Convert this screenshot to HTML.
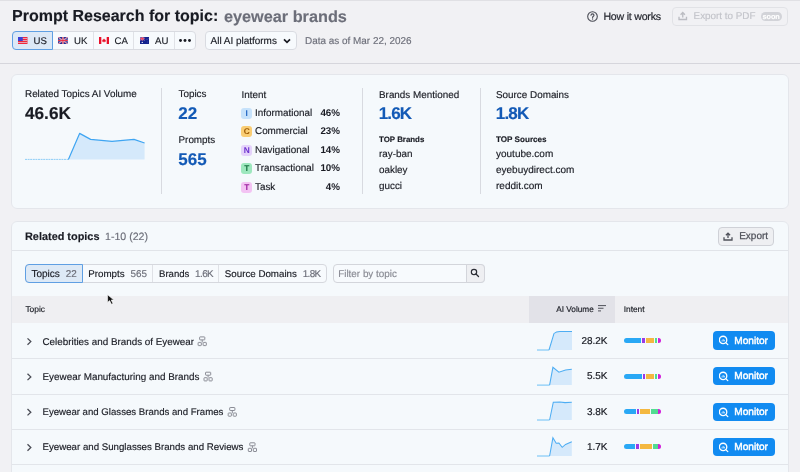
<!DOCTYPE html>
<html><head><meta charset="utf-8">
<style>
*{box-sizing:border-box;margin:0;padding:0}
html,body{width:800px;height:472px;overflow:hidden}
body{background:#f1f1f4;font-family:"Liberation Sans",sans-serif;color:#191b23;position:relative;text-rendering:geometricPrecision}
.t{position:absolute;white-space:nowrap;line-height:1;-webkit-text-stroke-width:0.15px}
.b{position:absolute}
.n{font-size:9.9px}
.big{font-size:17px;font-weight:bold}
.blue{color:#135ab6}
.gray{color:#6c6e79}
.vdiv{position:absolute;width:1px;background:#d8dae0}
.badge{position:absolute;left:241.2px;width:11px;height:11px;border-radius:3px;font-size:8.4px;font-weight:bold;text-align:center;line-height:11px}
.pct{position:absolute;left:300px;width:40px;text-align:right;font-size:9.8px;font-weight:bold;line-height:1}
.il{left:255px}
.tab{position:absolute;top:264px;height:18.5px;border:1px solid #d5d7dd;background:#f7fafd}
.rowdiv{position:absolute;left:12px;width:776px;height:1px;background:#e2e5ea}
.mon{position:absolute;left:712.5px;width:62px;height:18.5px;background:#118bf1;border-radius:4px}
.mon span{position:absolute;left:21.8px;top:5.5px;color:#fff;font-size:10.1px;line-height:1;-webkit-text-stroke:0.45px #fff}
.mon svg{position:absolute;left:6px;top:4px}
.val{position:absolute;left:560px;width:47.5px;text-align:right;font-size:9.95px;line-height:1;margin-top:0.6px;-webkit-text-stroke-width:0.2px}
</style></head><body><div style="position:absolute;left:0;top:0;width:800px;height:472px;will-change:transform">
<div class="b" style="left:0;top:0;width:800px;height:1px;background:#e0e0e4"></div>

<div class="t" style="left:12px;top:9px;font-size:16px;font-weight:bold">Prompt Research for topic:</div>
<div class="t" style="left:224px;top:9px;font-size:16.25px;font-weight:bold;color:#6c6e79">eyewear brands</div>

<!-- country segmented control -->
<div class="b" style="left:11.5px;top:31px;width:184.2px;height:19px;border:1px solid #d9dbe1;border-radius:4px;background:#f7fafd"></div>
<div class="b" style="left:11.5px;top:31px;width:41.5px;height:19px;border:1px solid #5f9fe3;border-radius:4px 0 0 4px;background:#dce8f6"></div>
<div class="b" style="left:92.5px;top:32px;width:1px;height:16.5px;background:#e0e2e7"></div>
<div class="b" style="left:133px;top:32px;width:1px;height:16.5px;background:#e0e2e7"></div>
<div class="b" style="left:173.5px;top:32px;width:1px;height:16.5px;background:#e0e2e7"></div>
<!-- US flag -->
<svg class="b" style="left:18px;top:37px" width="9.5" height="7" viewBox="0 0 19 14">
<rect width="19" height="14" fill="#f0283c"/>
<rect y="2" width="19" height="2" fill="#e4a0b0"/><rect y="6" width="19" height="2" fill="#e4a0b0"/><rect y="10" width="19" height="2" fill="#e4a0b0"/>
<rect width="9.5" height="8" fill="#3b3fd6"/></svg>
<div class="t" style="left:33.5px;top:37.1px;font-size:9.6px">US</div>
<!-- UK flag -->
<svg class="b" style="left:58.3px;top:37px" width="9.8" height="7" viewBox="0 0 19.6 14">
<rect width="19.6" height="14" fill="#1f2f95"/>
<path d="M0 0L19.6 14M19.6 0L0 14" stroke="#e8c8dc" stroke-width="2.2"/>
<path d="M0 0L19.6 14M19.6 0L0 14" stroke="#e03a55" stroke-width="1"/>
<path d="M9.8 0V14M0 7H19.6" stroke="#f0d0dc" stroke-width="3"/>
<path d="M9.8 0V14M0 7H19.6" stroke="#e8283f" stroke-width="1.8"/></svg>
<div class="t" style="left:74px;top:37.1px;font-size:9.6px">UK</div>
<!-- CA flag -->
<svg class="b" style="left:98.8px;top:37px" width="10" height="7" viewBox="0 0 20 14">
<rect width="20" height="14" fill="#f8f8fa"/>
<rect width="4.6" height="14" fill="#e8102a"/><rect x="15.4" width="4.6" height="14" fill="#e8102a"/>
<path d="M10 3L11.3 5.2L12.6 4.8L12.3 7L14.2 6.3L13.8 8.4L12.5 9.4H10.5V11.2H9.5V9.4H7.5L6.2 8.4L5.8 6.3L7.7 7L7.4 4.8L8.7 5.2Z" fill="#e8102a"/></svg>
<div class="t" style="left:114.5px;top:37.1px;font-size:9.6px">CA</div>
<!-- AU flag -->
<svg class="b" style="left:139.5px;top:37px" width="9.5" height="7" viewBox="0 0 19 14">
<rect width="19" height="14" fill="#14228e"/>
<path d="M0 0L9 7M9 0L0 7" stroke="#c8a0d8" stroke-width="1.4"/>
<path d="M4.5 0V7M0 3.5H9" stroke="#f0b0c0" stroke-width="2.4"/>
<path d="M4.5 0V7M0 3.5H9" stroke="#f03050" stroke-width="1.6"/>
<circle cx="4.5" cy="10.8" r="1.4" fill="#f4f6ff"/><circle cx="14" cy="4.5" r="0.9" fill="#8fa0e0"/><circle cx="16.5" cy="3" r="0.7" fill="#8fa0e0"/><circle cx="15" cy="10" r="0.8" fill="#6070c0"/></svg>
<div class="t" style="left:155px;top:37.1px;font-size:9.6px">AU</div>
<!-- dots -->
<svg class="b" style="left:179px;top:39px" width="12" height="3" viewBox="0 0 12 3">
<circle cx="1.5" cy="1.5" r="1.45" fill="#191b23"/><circle cx="6" cy="1.5" r="1.45" fill="#191b23"/><circle cx="10.5" cy="1.5" r="1.45" fill="#191b23"/></svg>

<!-- platforms -->
<div class="b" style="left:204.5px;top:31px;width:92.2px;height:19px;border:1px solid #d9dbe1;border-radius:4px;background:#f7fafd"></div>
<div class="t" style="left:210.6px;top:37.2px;font-size:9.95px">All AI platforms</div>
<svg class="b" style="left:283px;top:38px" width="8" height="6" viewBox="0 0 8 6"><path d="M1 1.4L4 4.4L7 1.4" fill="none" stroke="#191b23" stroke-width="1.7"/></svg>
<div class="t gray" style="left:305px;top:37.2px;font-size:9.95px">Data as of Mar 22, 2026</div>

<!-- how it works -->
<svg class="b" style="left:587px;top:10.5px" width="11" height="11" viewBox="0 0 22 22">
<circle cx="11" cy="11" r="9.6" fill="none" stroke="#4a4c55" stroke-width="2.2"/>
<path d="M8 8.6C8 6.8 9.3 5.8 11 5.8C12.8 5.8 14 6.9 14 8.4C14 10.4 11.2 10.6 11.2 12.8" fill="none" stroke="#4a4c55" stroke-width="2.2" stroke-linecap="round"/>
<circle cx="11.2" cy="16" r="1.3" fill="#4a4c55"/></svg>
<div class="t" style="left:603.4px;top:11.6px;font-size:10.6px;letter-spacing:-0.22px;color:#25272f;-webkit-text-stroke:0.2px #25272f">How it works</div>
<div class="b" style="left:672px;top:7px;width:116px;height:18.5px;border:1px solid #e1e2e6;border-radius:4px;background:#f1f1f4"></div>
<svg class="b" style="left:678px;top:11px" width="9.5" height="9.5" viewBox="0 0 19 19">
<path d="M9.5 13V3.2M5.2 7.3L9.5 3L13.8 7.3M2 11.5V17H17V11.5" fill="none" stroke="#bbbcc2" stroke-width="2.7"/></svg>
<div class="t" style="left:693.6px;top:12.1px;font-size:9.85px;color:#c3c4ca">Export to PDF</div>
<div class="b" style="left:760.7px;top:12.2px;width:21.5px;height:8.8px;border-radius:4.4px;background:#d2d3d8"></div>
<div class="t" style="left:762.4px;top:13.1px;font-size:7.3px;font-weight:bold;color:#ffffff">soon</div>

<div class="b" style="left:0;top:63px;width:800px;height:1px;background:#d6d6dc"></div>

<!-- summary card -->
<div class="b" style="left:11px;top:74px;width:777.5px;height:134.5px;border:1px solid #e4e6eb;border-radius:6px;background:#f5f9fc"></div>
<div class="t n" style="left:25px;top:90.4px">Related Topics AI Volume</div>
<div class="t big" style="left:25px;top:104.8px;font-size:17.2px">46.6K</div>
<svg class="b" style="left:0;top:0" width="170" height="170">
<path d="M68.4 159.4L79.6 133.4L90.6 139.4L112 141.4L134 139.4L144.6 143L144.6 159.4Z" fill="#d5e9fb"/>
<path d="M25 159.4H68.4" stroke="#8fcdf6" stroke-width="1" stroke-dasharray="2 0.6"/>
<path d="M68.4 159.4L79.6 133.4L90.6 139.4L112 141.4L134 139.4L144.6 143" fill="none" stroke="#3fa5f2" stroke-width="1.2" stroke-linejoin="round"/>
</svg>
<div class="vdiv" style="left:161px;top:88px;height:106px"></div>
<div class="t n" style="left:178.5px;top:90.3px">Topics</div>
<div class="t big blue" style="left:178.3px;top:104.8px">22</div>
<div class="t n" style="left:178.5px;top:136.3px">Prompts</div>
<div class="t big blue" style="left:178.3px;top:150.7px">565</div>

<div class="t n" style="left:241.5px;top:90.6px">Intent</div>
<div class="badge" style="top:108px;background:#c6e2fb;color:#2468c4">I</div>
<div class="t n il" style="top:109.1px">Informational</div>
<div class="pct" style="top:109.1px">46%</div>
<div class="badge" style="top:126.3px;background:#f9cd74;color:#985600">C</div>
<div class="t n il" style="top:127.3px">Commercial</div>
<div class="pct" style="top:127.3px">23%</div>
<div class="badge" style="top:144.7px;background:#e4d2fb;color:#6a2fce">N</div>
<div class="t n il" style="top:145.7px">Navigational</div>
<div class="pct" style="top:145.7px">14%</div>
<div class="badge" style="top:163.1px;background:#9de7be;color:#14703e">T</div>
<div class="t n il" style="top:164.1px">Transactional</div>
<div class="pct" style="top:164.1px">10%</div>
<div class="badge" style="top:181.5px;background:#f3c3f3;color:#9a1f9f">T</div>
<div class="t n il" style="top:182.5px">Task</div>
<div class="pct" style="top:182.5px">4%</div>

<div class="vdiv" style="left:361.5px;top:88px;height:106px"></div>
<div class="t n" style="left:379px;top:90.7px">Brands Mentioned</div>
<div class="t big blue" style="left:378.8px;top:104.6px;letter-spacing:-0.9px">1.6K</div>
<div class="t" style="left:379px;top:135.9px;font-size:7.9px;font-weight:bold">TOP Brands</div>
<div class="t n" style="left:379px;top:150.0px">ray-ban</div>
<div class="t n" style="left:379px;top:166.0px">oakley</div>
<div class="t n" style="left:379px;top:181.5px">gucci</div>

<div class="vdiv" style="left:479.5px;top:88px;height:106px"></div>
<div class="t n" style="left:496px;top:90.7px">Source Domains</div>
<div class="t big blue" style="left:495.8px;top:104.6px;letter-spacing:-0.8px">1.8K</div>
<div class="t" style="left:496px;top:135.9px;font-size:8.1px;font-weight:bold">TOP Sources</div>
<div class="t" style="left:496px;top:150.0px;font-size:10px">youtube.com</div>
<div class="t" style="left:496px;top:166.0px;font-size:10px">eyebuydirect.com</div>
<div class="t" style="left:496px;top:181.5px;font-size:10px">reddit.com</div>

<!-- related topics card -->
<div class="b" style="left:11px;top:220.6px;width:777.5px;height:270px;border:1px solid #e4e6eb;border-radius:6px;background:#f5f9fc"></div>
<div class="t" style="left:25px;top:232.0px;font-size:10.9px;font-weight:bold">Related topics</div>
<div class="t gray" style="left:105px;top:232.2px;font-size:10.6px">1-10 (22)</div>
<div class="b" style="left:717.8px;top:226.6px;width:56.7px;height:19.2px;border:1px solid #cfd1d7;border-radius:4px;background:#eeeff2"></div>
<svg class="b" style="left:723px;top:231.5px" width="10" height="9" viewBox="0 0 20 18">
<path d="M10 12V2.5M5.8 6.5L10 2.3L14.2 6.5M2 10.5V16H18V10.5" fill="none" stroke="#4f515a" stroke-width="2.6"/></svg>
<div class="t" style="left:739.2px;top:231.7px;font-size:10px;color:#50525b;-webkit-text-stroke:0.25px #50525b">Export</div>
<div class="b" style="left:12px;top:250px;width:776px;height:1px;background:#e1e4e9"></div>

<!-- tabs -->
<div class="b" style="left:25px;top:264px;width:301.8px;height:19px;border:1px solid #d6d8de;border-radius:4px;background:#f7fafd"></div>
<div class="b" style="left:25px;top:264px;width:58px;height:19px;border:1px solid #5f9fe3;border-radius:4px 0 0 4px;background:#dde9f6"></div>
<div class="b" style="left:152.3px;top:265px;width:1px;height:16.8px;background:#dfe1e6"></div>
<div class="b" style="left:218.4px;top:265px;width:1px;height:16.8px;background:#dfe1e6"></div>
<div class="t" style="left:31.4px;top:270.2px;font-size:10.05px">Topics</div>
<div class="t gray" style="left:65.8px;top:270.2px;font-size:9.9px">22</div>
<div class="t" style="left:88.2px;top:270.2px;font-size:9.8px">Prompts</div>
<div class="t gray" style="left:130.6px;top:270.2px;font-size:9.9px">565</div>
<div class="t" style="left:159px;top:270.2px;font-size:9.6px">Brands</div>
<div class="t gray" style="left:195.1px;top:270.2px;font-size:9.9px;letter-spacing:-0.6px">1.6K</div>
<div class="t" style="left:224.8px;top:270.2px;font-size:9.75px">Source Domains</div>
<div class="t gray" style="left:302.7px;top:270.2px;font-size:9.9px;letter-spacing:-0.6px">1.8K</div>

<!-- filter -->
<div class="b" style="left:332.5px;top:264px;width:152px;height:19px;border:1px solid #d3d5db;border-radius:4px;background:#f7fafd"></div>
<div class="b" style="left:466px;top:264px;width:18.5px;height:19px;border:1px solid #d3d5db;border-radius:0 4px 4px 0;background:#eeeff2"></div>
<div class="t" style="left:338.2px;top:269.6px;font-size:9.9px;color:#888a93">Filter by topic</div>
<svg class="b" style="left:470px;top:268px" width="10" height="10" viewBox="0 0 20 20">
<circle cx="8" cy="8" r="5.3" fill="none" stroke="#2b2d35" stroke-width="2.4"/>
<path d="M12 12L17 17" stroke="#2b2d35" stroke-width="2.6" stroke-linecap="round"/></svg>

<!-- table header -->
<div class="b" style="left:12px;top:296px;width:776px;height:27px;background:#efeff2"></div>
<div class="b" style="left:529px;top:296px;width:86.2px;height:27px;background:#e2e2e8"></div>
<div class="t" style="left:25.4px;top:304.7px;font-size:8.45px">Topic</div>
<div class="t" style="left:556.2px;top:306.0px;font-size:8.25px">AI Volume</div>
<svg class="b" style="left:598px;top:305px" width="8" height="7" viewBox="0 0 16 14">
<path d="M0 1.2H16M0 6.5H11M0 11.8H6" stroke="#4f515a" stroke-width="2"/></svg>
<div class="t" style="left:623.7px;top:305.2px;font-size:8.35px">Intent</div>

<!-- rows -->
<div class="rowdiv" style="top:358px"></div>
<div class="rowdiv" style="top:393.5px"></div>
<div class="rowdiv" style="top:429px"></div>
<div class="rowdiv" style="top:463.8px"></div>

<svg class="b" style="left:0;top:0" width="800" height="472">
<defs>
<g id="chev"><path d="M0 0L3.3 3.2L0 6.4" fill="none" stroke="#4a4c55" stroke-width="1.3"/></g>
<g id="tree" fill="none" stroke="#8b8d96" stroke-width="1">
<rect x="2.3" y="0.5" width="5.2" height="3" rx="0.5"/>
<path d="M4.9 3.5V6"/>
<rect x="0.8" y="6" width="3.2" height="3.2" rx="0.5"/>
<rect x="5.8" y="6" width="3.2" height="3.2" rx="0.5"/>
</g>
</defs>
<use href="#chev" x="27.5" y="338.4"/>
<use href="#chev" x="27.5" y="373.7"/>
<use href="#chev" x="27.5" y="409"/>
<use href="#chev" x="27.5" y="444.3"/>
<use href="#tree" x="197.3" y="336.4"/>
<use href="#tree" x="203.2" y="371.7"/>
<use href="#tree" x="227.4" y="407"/>
<use href="#tree" x="247.5" y="442.3"/>

<!-- sparklines -->
<g>
<path d="M549 350L555 332.5L558 331.5L572 331.4V350Z" fill="#d5e9fb"/>
<path d="M537 350H549" stroke="#6cc0f5" stroke-width="1"/>
<path d="M549 350L554 333.5Q556 331.5 560 331.5L572 331.4" fill="none" stroke="#4dadf3" stroke-width="1.05"/>
</g>
<g>
<path d="M549.6 385.1L552.9 367.3L558.9 372.2L565.6 370L571.8 369.3V385.1Z" fill="#d5e9fb"/>
<path d="M537 385.1H549.6" stroke="#6cc0f5" stroke-width="1"/>
<path d="M549.6 385.1L552.9 367.3L558.9 372.2L565.6 370L571.8 369.3" fill="none" stroke="#4dadf3" stroke-width="1.05"/>
</g>
<g>
<path d="M549.6 420L553.3 402.2L560 402L565 402.6L571.8 402.2V420Z" fill="#d5e9fb"/>
<path d="M537 420H549.6" stroke="#6cc0f5" stroke-width="1"/>
<path d="M549.6 420L553.3 402.2L560 402L565 402.6L571.8 402.2" fill="none" stroke="#4dadf3" stroke-width="1.05"/>
</g>
<g>
<path d="M549.6 456L552.9 437.8L556.2 443.3L558.9 443L562.2 447.3L565.6 444.4L568.9 443L571.8 441.8V456Z" fill="#d5e9fb"/>
<path d="M537 456H549.6" stroke="#6cc0f5" stroke-width="1"/>
<path d="M549.6 456L552.9 437.8L556.2 443.3L558.9 443L562.2 447.3L565.6 444.4L568.9 443L571.8 441.8" fill="none" stroke="#4dadf3" stroke-width="1.05"/>
</g>


</svg>

<!-- intent bars as divs -->
<div class="b" style="left:623.9px;top:337.9px;width:17.20px;height:5.3px;border-radius:2.6px 0 0 2.6px;background:#29a8f5"></div>
<div class="b" style="left:642.1px;top:337.9px;width:2.50px;height:5.3px;background:#9a3ae6"></div>
<div class="b" style="left:645.8px;top:337.9px;width:8.45px;height:5.3px;background:#f4b840"></div>
<div class="b" style="left:655.2px;top:337.9px;width:2.20px;height:5.3px;background:#52dc92"></div>
<div class="b" style="left:658.3px;top:337.9px;width:2.80px;height:5.3px;border-radius:0 2.6px 2.6px 0;background:#d11fda"></div>
<div class="b" style="left:623.9px;top:373.6px;width:18.20px;height:5.3px;border-radius:2.6px 0 0 2.6px;background:#29a8f5"></div>
<div class="b" style="left:643.0px;top:373.6px;width:2.20px;height:5.3px;background:#9a3ae6"></div>
<div class="b" style="left:646.1px;top:373.6px;width:8.15px;height:5.3px;background:#f4b840"></div>
<div class="b" style="left:655.2px;top:373.6px;width:2.20px;height:5.3px;background:#52dc92"></div>
<div class="b" style="left:658.3px;top:373.6px;width:2.80px;height:5.3px;border-radius:0 2.6px 2.6px 0;background:#d11fda"></div>
<div class="b" style="left:623.9px;top:408.9px;width:12.50px;height:5.3px;border-radius:2.6px 0 0 2.6px;background:#29a8f5"></div>
<div class="b" style="left:637.1px;top:408.9px;width:1.80px;height:5.3px;background:#9a3ae6"></div>
<div class="b" style="left:640.2px;top:408.9px;width:10.00px;height:5.3px;background:#f4b840"></div>
<div class="b" style="left:651.1px;top:408.9px;width:6.60px;height:5.3px;background:#52dc92"></div>
<div class="b" style="left:658.3px;top:408.9px;width:2.80px;height:5.3px;border-radius:0 2.6px 2.6px 0;background:#d11fda"></div>
<div class="b" style="left:623.9px;top:444.1px;width:11.30px;height:5.3px;border-radius:2.6px 0 0 2.6px;background:#29a8f5"></div>
<div class="b" style="left:636.1px;top:444.1px;width:2.50px;height:5.3px;background:#9a3ae6"></div>
<div class="b" style="left:639.75px;top:444.1px;width:12.50px;height:5.3px;background:#f4b840"></div>
<div class="b" style="left:653.0px;top:444.1px;width:4.70px;height:5.3px;background:#52dc92"></div>
<div class="b" style="left:658.3px;top:444.1px;width:2.80px;height:5.3px;border-radius:0 2.6px 2.6px 0;background:#d11fda"></div>

<!-- topic names -->
<div class="t" style="left:42.5px;top:337.5px;font-size:9.85px">Celebrities and Brands of Eyewear</div>
<div class="t" style="left:42.5px;top:372.8px;font-size:9.9px">Eyewear Manufacturing and Brands</div>
<div class="t" style="left:42.5px;top:408.0px;font-size:9.65px">Eyewear and Glasses Brands and Frames</div>
<div class="t" style="left:42.5px;top:443.3px;font-size:9.7px">Eyewear and Sunglasses Brands and Reviews</div>

<div class="val" style="top:336.5px">28.2K</div>
<div class="val" style="top:371.8px">5.5K</div>
<div class="val" style="top:407.0px">3.8K</div>
<div class="val" style="top:442.3px">1.7K</div>

<div class="mon" style="top:331.3px"><svg width="11" height="11" viewBox="0 0 22 22"><circle cx="8.2" cy="9.9" r="7.4" fill="none" stroke="#fff" stroke-width="2.6"/><path d="M13.6 15.3L17.6 19.3" stroke="#fff" stroke-width="2.6" stroke-linecap="round"/><path d="M6 12.8V10.8M8.3 12.8V8.2M10.6 12.8V9.6" stroke="#fff" stroke-width="1.7"/></svg><span>Monitor</span></div>
<div class="mon" style="top:366.9px"><svg width="11" height="11" viewBox="0 0 22 22"><circle cx="8.2" cy="9.9" r="7.4" fill="none" stroke="#fff" stroke-width="2.6"/><path d="M13.6 15.3L17.6 19.3" stroke="#fff" stroke-width="2.6" stroke-linecap="round"/><path d="M6 12.8V10.8M8.3 12.8V8.2M10.6 12.8V9.6" stroke="#fff" stroke-width="1.7"/></svg><span>Monitor</span></div>
<div class="mon" style="top:402.5px"><svg width="11" height="11" viewBox="0 0 22 22"><circle cx="8.2" cy="9.9" r="7.4" fill="none" stroke="#fff" stroke-width="2.6"/><path d="M13.6 15.3L17.6 19.3" stroke="#fff" stroke-width="2.6" stroke-linecap="round"/><path d="M6 12.8V10.8M8.3 12.8V8.2M10.6 12.8V9.6" stroke="#fff" stroke-width="1.7"/></svg><span>Monitor</span></div>
<div class="mon" style="top:437.8px"><svg width="11" height="11" viewBox="0 0 22 22"><circle cx="8.2" cy="9.9" r="7.4" fill="none" stroke="#fff" stroke-width="2.6"/><path d="M13.6 15.3L17.6 19.3" stroke="#fff" stroke-width="2.6" stroke-linecap="round"/><path d="M6 12.8V10.8M8.3 12.8V8.2M10.6 12.8V9.6" stroke="#fff" stroke-width="1.7"/></svg><span>Monitor</span></div>

<!-- cursor -->
<svg class="b" style="left:107px;top:294px" width="9" height="12" viewBox="0 0 9 12">
<path d="M0.6 0.8V8.4L2.6 6.6L4.5 10.3L6 9.6L4.2 6H6.9Z" fill="#111" stroke="#fff" stroke-width="0.6" stroke-linejoin="round"/></svg>
</div></body></html>
